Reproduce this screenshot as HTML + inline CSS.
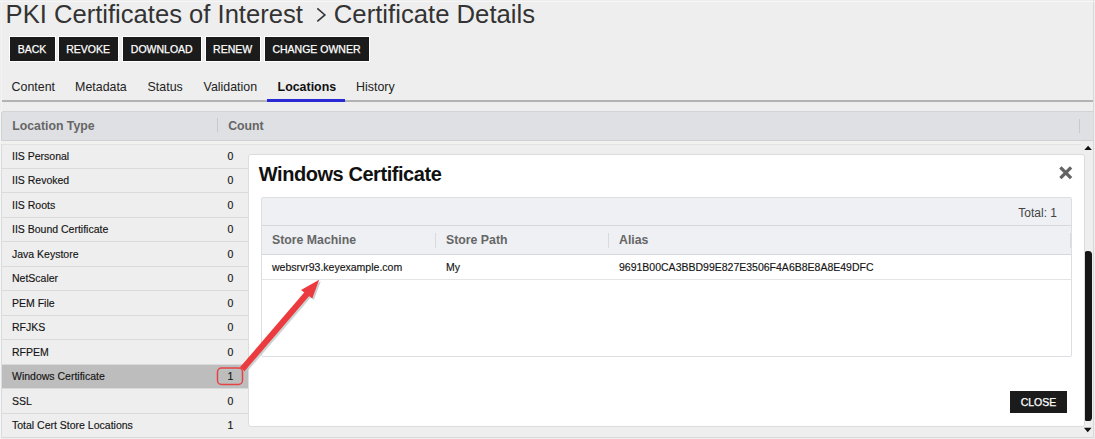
<!DOCTYPE html>
<html><head><meta charset="utf-8">
<style>
*{margin:0;padding:0;box-sizing:border-box}
html,body{width:1095px;height:439px;overflow:hidden;background:#eeeeee;font-family:"Liberation Sans",sans-serif;color:#222}
#frame{position:absolute;left:1px;top:-5px;width:1093px;height:443px;border:1px solid #d8d8d8;border-left-color:#f3f3f3;border-top:none}
#wline{position:absolute;left:0;top:111px;width:1px;height:328px;background:#f5f5f3}
#topline{position:absolute;left:0;top:1px;width:1095px;height:1px;background:#f6f6f6}
.t{position:absolute;white-space:nowrap}
#title1{left:5.6px;top:-1px;font-size:25.6px;color:#333;line-height:30px}
#title2{left:333.8px;top:-1px;font-size:25.7px;color:#333;line-height:30px}
#chev{position:absolute;left:316px;top:7px}
.btn{position:absolute;top:36px;height:25.5px;background:#1b1b1b;border:1.5px solid #fff;color:#fff;-webkit-text-stroke:0.25px #fff;font-size:10.5px;text-align:center;line-height:24.4px;white-space:nowrap}
.tab{position:absolute;top:78.5px;font-size:12.4px;color:#222;white-space:nowrap;line-height:16px}
#tabline{position:absolute;left:2px;top:100px;width:1091px;height:2px;background:#b3b3b3}
#tabact{position:absolute;left:267px;top:98.5px;width:78px;height:3.5px;background:#2a2ad4}
#thead{position:absolute;left:1px;top:111px;width:1092px;height:29.5px;background:#dfe0e4;border-top:1px solid #d2d3d7;border-left:1px solid #d0d1d5;border-bottom:1px solid #cfd0d4;border-top-left-radius:3px}
.th{position:absolute;top:6.6px;font-size:12.3px;font-weight:bold;color:#666;white-space:nowrap;line-height:14px}
.vsep{position:absolute;width:1px;background:#c8c9cd}
#strip{position:absolute;left:2px;top:141px;width:1079px;height:3.5px;background:#f1f1ef;border-bottom:1.5px solid #e2e2e2;z-index:1}
.row{position:absolute;left:1px;width:1081px;border-left:1px solid #d9dce1;height:24.5px;border-bottom:1px solid #dadada;font-size:10.5px;color:#151515;background:#eeeeee;-webkit-text-stroke:0.15px #151515}
.row.hl{background:#bdbdbd}
.row span{position:absolute;top:5.2px;white-space:nowrap;line-height:12px}
.row .c1{left:10px}
.row .c2{left:225.5px}
#modal{position:absolute;left:248px;top:154px;width:837px;height:273px;background:#fff;border:1px solid #dcdcdc;border-radius:3px}
#mtitle{position:absolute;left:9.8px;top:7px;font-size:20px;letter-spacing:-0.44px;font-weight:bold;color:#111;line-height:24px;white-space:nowrap}
#mclose{position:absolute;left:808.8px;top:9.5px}
#itable{position:absolute;left:12px;top:42px;width:811px;height:160px;border:1px solid #dcdee2;border-radius:2px;background:#fff}
#itool{position:absolute;left:0;top:0;width:809px;height:28px;background:#eef0f4;border-bottom:1px solid #d6d8de}
#ihead{position:absolute;left:0;top:28px;width:809px;height:29px;background:#eef0f4;border-bottom:1px solid #d6d8de}
#irow{position:absolute;left:0;top:57px;width:809px;height:25px;border-bottom:1px solid #e4e4e4}
.ith{position:absolute;top:6.5px;font-size:12.3px;font-weight:bold;color:#666;white-space:nowrap;line-height:14px}
.itd{position:absolute;top:5.5px;font-size:10.5px;color:#151515;-webkit-text-stroke:0.15px #151515;white-space:nowrap;line-height:12px}
#btnclose{position:absolute;left:761px;top:236px;width:57px;height:22px;background:#1b1b1b;color:#fff;-webkit-text-stroke:0.25px #fff;font-size:10.5px;text-align:center;line-height:22px}
#sb-up{position:absolute;left:1083.5px;top:145.4px}
#sb-down{position:absolute;left:1082.6px;top:426.8px}
#thumb{position:absolute;left:1084.3px;top:251.3px;width:7.3px;height:169.7px;background:#161616;border-radius:3.6px}
#arrow{position:absolute;left:0;top:0}
</style></head><body>
<div id="frame"></div>
<div id="wline"></div>
<div id="topline"></div>
<div class="t" id="title1">PKI Certificates of Interest</div>
<svg id="chev" width="12" height="18" viewBox="0 0 12 18"><polyline points="1.3,1.4 8.9,7.9 1.3,14.4" fill="none" stroke="#383838" stroke-width="1.6"/></svg>
<div class="t" id="title2">Certificate Details</div>

<div class="btn" style="left:8.5px;width:47px">BACK</div>
<div class="btn" style="left:57.5px;width:61.3px">REVOKE</div>
<div class="btn" style="left:121.5px;width:80.5px">DOWNLOAD</div>
<div class="btn" style="left:204.5px;width:56.2px">RENEW</div>
<div class="btn" style="left:263.5px;width:106px">CHANGE OWNER</div>

<div class="tab" style="left:11.6px">Content</div>
<div class="tab" style="left:75.1px">Metadata</div>
<div class="tab" style="left:147.6px">Status</div>
<div class="tab" style="left:203.6px">Validation</div>
<div class="tab" style="left:277.6px;font-weight:bold;color:#111">Locations</div>
<div class="tab" style="left:356.1px">History</div>
<div id="tabline"></div>
<div id="tabact"></div>

<div id="thead">
  <div class="th" style="left:10.2px">Location Type</div>
  <div class="vsep" style="left:214.6px;top:6px;height:14px"></div>
  <div class="th" style="left:226.2px">Count</div>
  <div class="vsep" style="left:1077px;top:6.5px;height:14px"></div>
</div>
<div id="strip"></div>

<div class="row" style="top:144.4px"><span class="c1">IIS Personal</span><span class="c2">0</span></div>
<div class="row" style="top:168.9px"><span class="c1">IIS Revoked</span><span class="c2">0</span></div>
<div class="row" style="top:193.4px"><span class="c1">IIS Roots</span><span class="c2">0</span></div>
<div class="row" style="top:217.9px"><span class="c1">IIS Bound Certificate</span><span class="c2">0</span></div>
<div class="row" style="top:242.4px"><span class="c1">Java Keystore</span><span class="c2">0</span></div>
<div class="row" style="top:266.9px"><span class="c1">NetScaler</span><span class="c2">0</span></div>
<div class="row" style="top:291.4px"><span class="c1">PEM File</span><span class="c2">0</span></div>
<div class="row" style="top:315.9px"><span class="c1">RFJKS</span><span class="c2">0</span></div>
<div class="row" style="top:340.4px"><span class="c1">RFPEM</span><span class="c2">0</span></div>
<div class="row hl" style="top:364.9px"><span class="c1">Windows Certificate</span><span class="c2">1</span></div>
<div class="row" style="top:389.4px"><span class="c1">SSL</span><span class="c2">0</span></div>
<div class="row" style="top:413.9px"><span class="c1">Total Cert Store Locations</span><span class="c2">1</span></div>

<svg id="sb-up" width="9" height="6" viewBox="0 0 9 6"><polygon points="0.3,5 4.1,0.7 7.9,5" fill="#111"/></svg>
<div id="thumb"></div>
<svg id="sb-down" width="9" height="6" viewBox="0 0 9 6"><polygon points="0.9,0.8 8.6,0.8 4.75,5.2" fill="#111"/></svg>

<div id="modal">
  <div id="mtitle">Windows Certificate</div>
  <svg id="mclose" width="15" height="15" viewBox="0 0 15 15"><path d="M2.4,2.4 L13.1,13.1 M13.1,2.4 L2.4,13.1" stroke="#646464" stroke-width="3.3" stroke-linecap="butt"/></svg>
  <div id="itable">
    <div id="itool"><div class="t" style="right:14px;top:8px;font-size:12px;color:#444;line-height:14px">Total: 1</div></div>
    <div id="ihead">
      <div class="ith" style="left:10px">Store Machine</div>
      <div class="vsep" style="left:172.6px;top:7px;height:14.5px;background:#d8dade"></div>
      <div class="ith" style="left:184px">Store Path</div>
      <div class="vsep" style="left:345.8px;top:7px;height:14.5px;background:#d8dade"></div>
      <div class="ith" style="left:357px">Alias</div>
      <div class="vsep" style="left:807.8px;top:7px;height:14.5px;background:#d8dade"></div>
    </div>
    <div id="irow">
      <div class="itd" style="left:10px">websrvr93.keyexample.com</div>
      <div class="itd" style="left:184px">My</div>
      <div class="itd" style="left:357px">9691B00CA3BBD99E827E3506F4A6B8E8A8E49DFC</div>
    </div>
  </div>
  <div id="btnclose">CLOSE</div>
</div>

<svg id="arrow" width="1095" height="439" viewBox="0 0 1095 439" style="pointer-events:none">
  <g transform="translate(1.6,1.6)" fill="none" stroke="#b9c6c6" opacity="0.75">
    <rect x="217.5" y="368" width="25" height="16.5" rx="4" stroke-width="1.5"/>
    <path d="M242.2,369.3 L308.6,292" stroke-width="6"/>
    <polygon points="319.2,279.7 301,290 312.3,298.5" fill="#b9c6c6" stroke="none"/>
  </g>
  <rect x="217.5" y="368" width="25" height="16.5" rx="4" fill="none" stroke="#e94244" stroke-width="1.5"/>
  <path d="M242.2,369.3 L308.6,292" stroke="#ec3b3f" stroke-width="6"/>
  <polygon points="319.2,279.7 301,290 312.3,298.5" fill="#ec3b3f"/>
</svg>
</body></html>
